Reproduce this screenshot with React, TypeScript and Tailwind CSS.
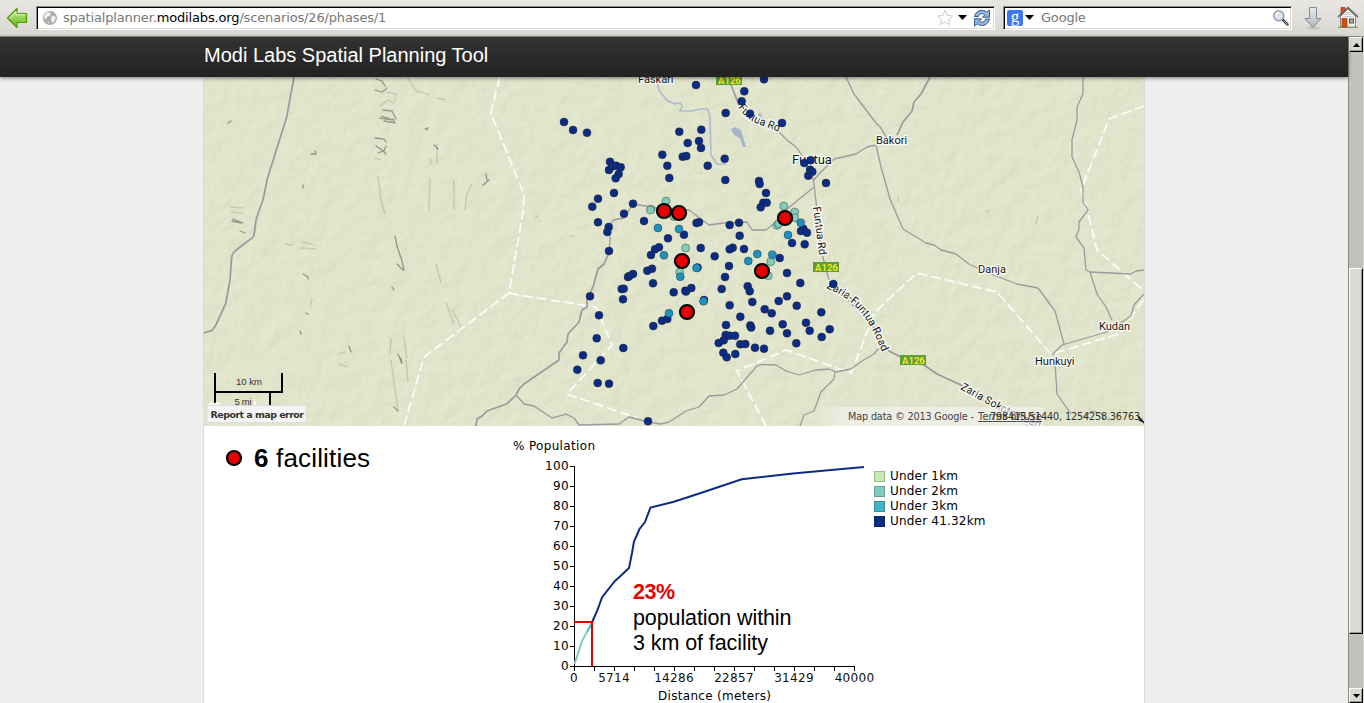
import React from "react";

type Point = [number, number];

const NAVY: Point[] = [
  [696,85],[564,122],[573,130],[587,132.7],[679.3,131.7],[701.3,129.7],[687.7,143],[699,141],[701,148],[662.3,154.7],
  [682.7,156.7],[686.3,156],[667.3,165.7],[707.7,165.7],[669.3,178],[610,161.7],[609,170],[612.3,166.3],[616,165.7],[620.7,167.3],
  [618.7,174],[615.7,178.3],[614,193],[598,198.7],[592.3,206.7],[633,203.7],[624,213.7],[598,222.3],[608.7,227],[607.3,232],
  [609,251],[644,221],[696.5,223],[699,222.3],[684,234.7],[668,238.3],[659,247.2],[655,249.3],[651,255],[700.7,248],
  [764,79.3],[744.3,91.3],[741.7,101.3],[750,113.7],[725.7,113],[782,123],[724.7,158.7],[725.3,180],[804.3,163],[810.7,160.3],
  [810,169.7],[812.3,171.7],[808.3,175.7],[826,183],[759,181],[759.7,184],[766,193],[763.3,202.7],[766.7,202.7],[760.7,207.3],
  [729.7,225],[739,222.7],[739.7,235.7],[803.3,228.7],[801,231],[807,232.7],[792,243],[804.7,244.3],[732.7,247.7],[729.7,249.3],
  [744,249],[590,296.3],[599,315.3],[596.7,338.3],[583,355.3],[600.7,360.3],[577.3,369.7],[597.7,383],[609,383.7],[623.3,348],
  [648,421.3],[628,277],[633,274],[629.3,276],[621.7,289],[623.7,288.7],[623,299.3],[647.3,270.7],[652,268.7],[653,283.3],
  [714.7,256.3],[673.7,292.3],[685.3,290.7],[686,291.5],[691.3,288],[653.3,326],[662,320.7],[667.3,319],[704,300],[729,266],
  [725,277],[721.7,289],[747.7,286.3],[749.7,291.3],[752.3,302],[729.7,305.3],[740.3,316.7],[726,325],[750.3,325.5],[751.2,327.5],
  [770,330.7],[779.7,258],[787,273],[800.3,283],[787,296.3],[778.7,301],[796.7,305.7],[764.7,309.3],[771.7,313.3],[821.3,312.3],
  [806,322.7],[809.7,330.7],[829.7,329.3],[821.7,337],[782.7,324.3],[787,333.3],[796.3,343.3],[833.3,284],[725.7,335],[729.7,335.7],
  [735,335.7],[718.7,343],[723.7,340.3],[740.3,344.3],[745.3,344],[755,347.7],[764,348.7],[723.3,352.7],[726.7,357.3],[735.3,354],
  [697.5,267.5],
];
const TEAL: Point[] = [
  [666,201],[651,209.3],[650.5,210],[674,216.5],[685.7,248],[679.7,272],[783.7,206],[794.7,212],[794.7,217.7],[777,225.3],[778.7,223.7],[770.7,261.7],[768.3,275.7],
];
const BLUE: Point[] = [
  [658,228],[679,229],[664,255.3],[696.5,268],[680.3,276.7],[669,313.3],[703.5,301.3],[800.7,222.7],[788,235],[748.3,261],[757.3,254],[772.3,254.7],
];
const FACILITIES: Point[] = [[664,211],[679,213],[785,218],[682,261],[762,271],[687,312]];

const MAJOR_ROADS = [
  "M294 77L286.7 117L267.3 178.7L263.3 198.7L256.3 218.7L254 235.3Q252 239 248 241L235 251Q232 254 231.7 257L230 280L225.7 303.7L215.7 325.3L212 330.5L204 333",
  "M476 426L477 419L482 416L487 411L507 403.7L516 395L519 389L524 384L559 360V353L567 342L568 334L579 322L582 310L587 307V300L593 287L598 269L604 264L609 253",
  "M729 80L739 105M883 345L889 351L901 357L924 365L937 374L961 385L994 407L1031 427",
  "M897 135L903 122L912 111L914 102L921 94L930 77",
];
const MINOR_ROADS = [
  "M609 253L610 239L609 227L613 220L624 218L633 204L652 207L664 210L689 210L709 225L724 223L747 222L752 230H766L779 220L787 209L814 187",
  "M516 395L524 404L534 406L552 418L566 414L574 418L579 425L619 424L629 417L648 422L661 424L669 422L686 411L699 407L709 396L724 395L737 389L757 366L762 364.5L776 365L786 371L799 375L816 370L829 369L836 372L851 369L862 361L874 354L877 350L883 347",
  "M835 372L834 379L821 392L814 411L804 415L800 426",
  "M776 129L787 140L796 147L803 157M812 172L814 184L817 210L821 250L827 273L830 283L871 323L883 345",
  "M814 180L819 174L834 159L856 154L867 147L876 145L881 167L890 199L903 229L926 243L934 245L941 250L956 254L969 264L991 274L1017 284L1038 288L1055 311L1064 344",
  "M846 77L854 94L876 123L881 128L886 137",
  "M1083 77V94L1077 107V120L1072 140V157L1079 172L1083 187V202L1088 210L1079 222V229L1076 237L1084 248L1086 270L1090 272L1131 274L1136 271L1144 270M1090 272L1097 294L1106 307L1112 320",
  "M1052 355L1062 345L1107 332L1131 316L1134 305L1144 294M1055 362L1057 394L1071 414M1084 417L1092 411L1102 414L1104 420",
];
const BORDERS = [
  "M499.7 77L490.7 113L524 194L523 212L509 293L424 357L404 426",
  "M509 293L524 296L596 307L612 345L567 394L637 418",
  "M766 426L737 371L786 350L851 373L871 323L874 313L917 273L997 292L1051 354L1119 334L1144 299",
  "M1144 106L1109 119L1081 190L1087 210L1097 250L1144 291",
];
const DARK_RELIEF = [
  "M376 79l6 2l3 5M375 90l7 2l5-4M383 110l9 1l4 8M380 118l13 2l-11-4M384 121l11 2l-2-4M375 138l9 1l2 3M376 146l8 5l2-5M378 153l5-2l3 3",
  "M233 219l10 4M232 221l9 2M240 231l5 2M231 121l-3 2M311 154l5 0l-1-3M303 185v3M303 274l5 3v2M306 313l2 1M300 331l1 3M349 346l2 6M425 129l3-1l-1 2",
  "M395 236l2 10l5 15l2 9M397 264l6 6M392 287l2 3M398 354l4 10l-1-6M394 407l4 4M434 145l4 4M486 174l1 6M489 180l-6 5",
];
const SOFT_RELIEF = [
  "M230 207l14 1M231 212l12 1M386 92l10 2l-1 8M380 106l8-6l6 3M375 158l6 2M378 176l3 24l4 14M404 337l3 22M391 338l-1 16M391 360l4 30l3 20M406 360l2 22",
  "M430 158l1 7M430 178l-1 32M472 184l-5 9l-2 17M436 264l5 19M446 302l8 23M452 309l9 18M437 98l9 2M415 90l14 5M437 143v20M454 180v30M406 75l10 16",
  "M285 244l8 1M301 242l14 3M300 248l16 1M312 298l-2 10M338 354l7-2M338 364l10 3M538 216l-3 1M573 235l-3 2M702 172l-2 2M986 212l3-1M1038 216l-2 8M898 197v5",
];

const SANS = '"Liberation Sans", Arial, sans-serif';
const DEJAVU = '"DejaVu Sans", Verdana, sans-serif';
const ROBOTO = "Roboto, sans-serif";

function MapLabel({ x, y, size = 11, children }: { x: number; y: number; size?: number; children: string }) {
  return (
    <text x={x} y={y} fontSize={size} fontFamily={ROBOTO} fill="#141414" stroke="#fff" strokeWidth={2.5} strokeOpacity={0.85} paintOrder="stroke">
      {children}
    </text>
  );
}

function CurvedLabel({ id, d, children }: { id: string; d: string; children: string }) {
  return (
    <>
      <path id={id} d={d} fill="none" />
      <text fontSize={10.8} fontFamily={ROBOTO} fill="#141414" stroke="#f6f6ee" strokeWidth={3} paintOrder="stroke">
        <textPath href={"#" + id}>{children}</textPath>
      </text>
    </>
  );
}

function Shield({ x, y }: { x: number; y: number }) {
  return (
    <g>
      <rect x={x} y={y} width={26} height={10} fill="#5f9c3b" />
      <text x={x + 2} y={y + 8.5} fontSize={9.6} fontWeight={600} fontFamily={ROBOTO} fill="#f3ee1c">A126</text>
    </g>
  );
}

function Dots({ points, color }: { points: Point[]; color: string }) {
  return (
    <g fill={color} stroke="#222" strokeOpacity={0.4} strokeWidth={1}>
      {points.map(([x, y], i) => <circle key={i} cx={x} cy={y} r={4} />)}
    </g>
  );
}

function PlannerMap() {
  return (
    <svg className="block h-[349px] w-[940px]" viewBox="204 77 940 349">
      <defs>
        <filter id="relief" x="0" y="0" width="100%" height="100%" colorInterpolationFilters="sRGB">
          <feTurbulence type="fractalNoise" baseFrequency="0.06" numOctaves={3} seed={8} result="n" />
          <feDiffuseLighting in="n" surfaceScale={0.6} diffuseConstant={1.155} lightingColor="#e0e5cb">
            <feDistantLight azimuth={225} elevation={60} />
          </feDiffuseLighting>
        </filter>
        <filter id="soften" x="-5%" y="-5%" width="110%" height="110%"><feGaussianBlur stdDeviation="0.7" /></filter>
        <linearGradient id="fade" x1="0" x2="1"><stop offset="0" stopColor="#fff" stopOpacity="0" /><stop offset="0.15" stopColor="#f5f5f5" stopOpacity="0.6" /></linearGradient>
      </defs>
      <rect x="204" y="77" width="940" height="349" fill="#e0e5cb" />
      <rect x="204" y="77" width="940" height="349" filter="url(#relief)" opacity="0.4" />
      <g fill="none" stroke="#6c7460" strokeOpacity={0.22} strokeWidth={1.6} filter="url(#soften)">
        {SOFT_RELIEF.map((d) => <path key={d} d={d} />)}
      </g>
      <g fill="none" stroke="#464c3e" strokeOpacity={0.5} strokeWidth={1.3} strokeLinecap="round" filter="url(#soften)">
        {DARK_RELIEF.map((d) => <path key={d} d={d} />)}
      </g>
      <g fill="none" stroke="#aebbcf" strokeWidth={1.6}>
        <path d="M657 83L660 92L668 101L675 104Q681 101 682 106L680 111H692L701 109L707 109Q710 112 710 120L711 155L717 164H726" />
      </g>
      <path d="M731 129l4-2l6 3l2 7l3 10l-3 0l-3-9l-6-3zM756 119l4-7l2 5l5 4l-3 3z" fill="#a5b6cb" />
      <g fill="none" stroke="#fff" strokeOpacity={0.9} strokeWidth={1.8} strokeDasharray="10 4">
        {BORDERS.map((d) => <path key={d} d={d} />)}
      </g>
      <g fill="none" stroke="#9b9b9d" strokeWidth={1.3} strokeLinejoin="round">
        {MINOR_ROADS.map((d) => <path key={d} d={d} />)}
      </g>
      <g fill="none" stroke="#999a9b" strokeWidth={1.7} strokeLinejoin="round">
        {MAJOR_ROADS.map((d) => <path key={d} d={d} />)}
      </g>
      <MapLabel x={638} y={83}>Faskari</MapLabel>
      <MapLabel x={876} y={144}>Bakori</MapLabel>
      <MapLabel x={792} y={164} size={13}>Funtua</MapLabel>
      <MapLabel x={978} y={273}>Danja</MapLabel>
      <MapLabel x={1099} y={330}>Kudan</MapLabel>
      <MapLabel x={1035} y={365}>Hunkuyi</MapLabel>
      <Shield x={716} y={75} />
      <Shield x={813} y={262} />
      <Shield x={900} y={355} />
      <CurvedLabel id="fr1" d="M738 107Q746 119 757 123.500L790 136">Funtua Rd</CurvedLabel>
      <CurvedLabel id="fr2" d="M813 207L820 262">Funtua Rd</CurvedLabel>
      <CurvedLabel id="zf" d="M826 288C848 297 864 309 878 342L884 356">Zaria-Funtua Road</CurvedLabel>
      <CurvedLabel id="zs" d="M960 389L1000 411L1060 438">Zaria Sokoto Road</CurvedLabel>
      <Dots points={NAVY} color="#0c2c84" />
      <Dots points={TEAL} color="#7fcdbb" />
      <Dots points={BLUE} color="#1d91c0" />
      <g fill="#e60000" stroke="#000" strokeWidth={2.2}>
        {FACILITIES.map(([x, y]) => <circle key={x} cx={x} cy={y} r={7} />)}
      </g>
      <path d="M215 373V405M214 392H283M282 373V392M270 392V405" fill="none" stroke="#000" strokeWidth={2} />
      <text x={236} y={385} fontSize={9.5} fontFamily={SANS} fill="#333" textLength={26}>10 km</text>
      <text x={234.500} y={405} fontSize={9.5} fontFamily={SANS} fill="#333" textLength={17}>5 mi</text>
      <path d="M209 405q4-4 6 0q3-4 5 0M255 405v-4" stroke="#fff" strokeWidth={2} fill="none" />
      <rect x="207" y="405.5" width="99" height="17" fill="#f5f5f5" stroke="#dcdce4" />
      <text x={210.500} y={418} fontSize={9.5} fontWeight="bold" fontFamily={DEJAVU} fill="#333" textLength={93.500}>Report a map error</text>
      <rect x="812" y="407" width="231" height="19" fill="url(#fade)" />
      <text x={848} y={420} fontSize={9.7} fontFamily={DEJAVU} fill="#444" textLength={126}>Map data © 2013 Google -</text>
      <text x={978} y={420} fontSize={9.7} fontFamily={DEJAVU} fill="#444" textLength={64} textDecoration="underline">Terms of Use</text>
      <text x={990} y={420} fontSize={9.7} fontFamily={DEJAVU} fill="#333" textLength={153}>798415.51440, 1254258.36763,</text>
      <path d="M1138 416L1144 423M1139 420l5 2" stroke="#222" strokeWidth={1.6} />
    </svg>
  );
}

const X_LABELS: [number, string][] = [[574, "0"], [614, "5714"], [674, "14286"], [734, "22857"], [794, "31429"], [854.5, "40000"]];

function PopulationChart() {
  return (
    <svg className="block h-[277px] w-[374px] shrink-0" viewBox="500 426 374 277" fontFamily={DEJAVU} fontSize={12}>
      <text x={513} y={450} textLength={82}>% Population</text>
      <g stroke="#000" strokeWidth={1} shapeRendering="crispEdges">
        <path d="M574.5 466V671M570 666.5H855" fill="none" />
        {Array.from({ length: 10 }, (_, i) => <path key={i} d={`M570 ${466.5 + i * 20}h5`} />)}
        {Array.from({ length: 14 }, (_, i) => <path key={i} d={`M${594.5 + i * 20} 666v5`} />)}
      </g>
      {Array.from({ length: 11 }, (_, i) => <text key={i} x={569} y={670 - i * 20} textAnchor="end" letterSpacing={0.4}>{String(i * 10)}</text>)}
      {X_LABELS.map(([x, label]) => <text key={label} x={x} y={682} textAnchor="middle" letterSpacing={0.3} fill="#111">{label}</text>)}
      <text x={658} y={700} textLength={113}>Distance (meters)</text>
      <g fill="none" strokeWidth={2}>
        <path d="M574.5 664L582.5 640L587 632" stroke="#7fcdbb" />
        <path d="M587 632L592 623" stroke="#41b6c4" />
        <path d="M592 622.5L597.5 610L602 597.5L614.5 581.5L620 576.5L629 568L632 553L634 541.5L639.5 529L645 522L650.5 507.5L673 502L700 493.3L741.7 479.3L793 473.5L864 467" stroke="#0c2c84" />
        <path d="M574 622H592V666" stroke="#e60000" />
      </g>
      <g fontFamily={SANS} fontSize={21.5}>
        <text x={633} y={599} fontWeight="bold" fill="#e60000" textLength={42}>23%</text>
        <text x={633} y={625} textLength={158.5}>population within</text>
        <text x={633} y={650} textLength={135}>3 km of facility</text>
      </g>
    </svg>
  );
}

const LEGEND = [
  { label: "Under 1km", color: "bg-[#c7e9b4]" },
  { label: "Under 2km", color: "bg-[#7fcdbb]" },
  { label: "Under 3km", color: "bg-[#41b6c4]" },
  { label: "Under 41.32km", color: "bg-[#0c2c84]" },
];

function BrowserBar() {
  return (
    <div className="flex h-[37px] items-start border-b border-[#8f8b84] bg-gradient-to-b from-[#e8e7e4] to-[#d9d7d2] pt-[6px] font-['DejaVu_Sans',sans-serif] text-[13px] text-[#777]">
      <svg className="ml-[6px] mt-px h-[22px] w-[22px] shrink-0" viewBox="0 0 22 22">
        <defs><linearGradient id="green" x2="0" y2="1"><stop stopColor="#c9f195" /><stop offset="1" stopColor="#5db512" /></linearGradient></defs>
        <path d="M1.500 11L11 1.500V6.500H20.500V15.500H11V20.500Z" fill="url(#green)" stroke="#4a9a0b" strokeWidth="1.2" strokeLinejoin="round" />
        <path d="M3.500 11L10 4.500V7.700H19.300" fill="none" stroke="#e1f9c4" />
      </svg>
      <div className="ml-[8px] flex h-[24px] w-[959px] shrink-0 items-center border border-t-[#8f8b84] border-r-white border-b-white border-l-[#8f8b84] bg-white pr-[2px] pl-[5px] shadow-[inset_1px_1px_0_#000,inset_-1px_-1px_0_#dddbd7]">
        <svg className="h-4 w-4 shrink-0" viewBox="0 0 16 16">
          <circle cx="8" cy="8" r="7" fill="#a9a9a9" />
          <path d="M3 4l3-2l3 1l-1 3l-3 1l-1 3l-2-3zM9 7l3-2l2 3l-2 4l-2 1l-1-3zM5 11l2 1v2z" fill="#eee" />
        </svg>
        <span className="mb-px ml-[5px] tracking-[-0.15px] whitespace-pre">spatialplanner.<span className="text-black">modilabs.org</span>/scenarios/26/phases/1</span>
        <svg className="ml-auto h-[18px] w-[56px] shrink-0" viewBox="936 9 56 18">
          <path d="M945 10.500l2.200 4.900l5.300.6l-4 3.500l1.200 5.200l-4.700-2.700l-4.700 2.700l1.200-5.200l-4-3.500l5.300-.6z" fill="#fff" stroke="#ccc" />
          <path d="M958 15h9l-4.500 5z" fill="#000" />
          <g fill="#8fb4df" stroke="#244f87" strokeWidth=".9" strokeLinejoin="round">
            <path d="M974.500 16.500C975.500 10.500 983 8.500 986.500 12.200L989.500 10V17.200H982.500L984.700 15C982 12.500 979 13.500 978.500 16.500Z" />
            <path d="M989.500 19C988.500 25 981 27.500 977.500 23.800L974.500 26V18.800H981.500L979.300 21C982 23.500 985 22 985.500 19Z" />
          </g>
        </svg>
      </div>
      <div className="ml-[8px] flex h-[24px] w-[289px] shrink-0 items-center border border-t-[#8f8b84] border-r-white border-b-white border-l-[#8f8b84] bg-white pl-[3px] shadow-[inset_1px_1px_0_#000,inset_-1px_-1px_0_#dddbd7]">
        <span className="flex h-4 w-4 shrink-0 items-center justify-center rounded-[2px] bg-[#3f78f5] pb-[4px] font-['Liberation_Serif',serif] text-[17px] leading-none text-white">g</span>
        <svg className="ml-[2px] h-[6px] w-[9px]" viewBox="0 0 9 6"><path d="M0 0h9L4.5 5z" /></svg>
        <span className="mb-px ml-[7px] tracking-[-0.2px]">Google</span>
        <svg className="mr-[1px] ml-auto h-[18px] w-[18px]" viewBox="0 0 18 18">
          <path d="M11 11L15.500 15.500" stroke="#444" strokeWidth="2.5" strokeLinecap="round" />
          <path d="M12 12L15.500 15.500" stroke="#aaa" strokeWidth="1" />
          <circle cx="6.800" cy="6.800" r="5" fill="#d6e6f7" stroke="#999" strokeWidth="1.4" />
          <path d="M4 6.500a3 3 0 0 1 3-3" fill="none" stroke="#fff" strokeWidth="1.5" />
        </svg>
      </div>
      <svg className="ml-[11px] h-[24px] w-[20px] shrink-0" viewBox="0 0 20 24">
        <defs><linearGradient id="silver" x2="0" y2="1"><stop stopColor="#e9edef" /><stop offset="1" stopColor="#adb7bc" /></linearGradient></defs>
        <ellipse cx="10" cy="22" rx="7" ry="1.5" fill="#aaa" opacity=".5" />
        <path d="M6.500 1.500H13.500V12.500H18L10 21.500L2 12.500H6.500Z" fill="url(#silver)" stroke="#858a8c" strokeLinejoin="round" />
      </svg>
      <svg className="ml-[14px] h-[22px] w-[22px] shrink-0" viewBox="0 0 22 22">
        <path d="M1 21.500h20" stroke="#85a83d" strokeWidth="1.5" />
        <path d="M4 1.500h4v8H4z" fill="#d75020" stroke="#9c2d0c" strokeWidth=".7" />
        <path d="M3.500 10.500L11 3l7.500 7.500V21h-15z" fill="#f4f4ef" stroke="#888" />
        <path d="M1 11L11 1.500L21 11" fill="none" stroke="#666" strokeWidth="1.6" />
        <path d="M7 8.500h8M6 10.500h10M9 6.500h4" stroke="#ccc" />
        <path d="M5 12.500h5V21H5z" fill="#d54d12" stroke="#98300b" strokeWidth=".7" />
        <rect x="12.5" y="13" width="4" height="4" fill="#aaa" stroke="#555" />
      </svg>
    </div>
  );
}

function ScrollButton({ up }: { up?: boolean }) {
  return (
    <div className="flex h-[15px] w-full items-center justify-center border border-t-white border-r-black border-b-black border-l-white bg-[#dad9d4] shadow-[inset_-1px_-1px_0_#999792]">
      <svg className="h-[4px] w-[7px]" viewBox="0 0 7 4"><path d={up ? "M0 4h7L3.5 0z" : "M0 0h7L3.5 4z"} /></svg>
    </div>
  );
}

export default function App() {
  return (
    <div className="flex h-[703px] w-[1364px] flex-col overflow-hidden bg-[#eee]">
      <BrowserBar />
      <div className="flex min-h-0 flex-1">
        <div className="flex min-w-0 flex-1 flex-col">
          <header className="relative z-10 flex h-[40px] shrink-0 items-center bg-gradient-to-b from-[#333] to-[#222] pb-[5px] pl-[204px] font-['Liberation_Sans',sans-serif] text-[20px] text-white shadow-[0_1px_4px_rgba(0,0,0,0.5)]">
            Modi Labs Spatial Planning Tool
          </header>
          <main className="ml-[203px] w-[942px] flex-1 border-x border-[#ddd] bg-white">
            <PlannerMap />
            <div className="flex h-[277px]">
              <div className="flex h-[64px] w-[296px] shrink-0 items-center pl-[21px] font-['Liberation_Sans',sans-serif] text-[26px] text-black">
                <svg className="mr-[11px] h-[18px] w-[18px]" viewBox="0 0 18 18"><circle cx="9" cy="9" r="7" fill="#e60000" stroke="#000" strokeWidth="2.2" /></svg>
                <span className="tracking-[0.17px]"><b>6</b> facilities</span>
              </div>
              <PopulationChart />
              <ul className="mt-[43px] font-['DejaVu_Sans',sans-serif] text-[12px] leading-[15px] tracking-[0.2px] text-black">
                {LEGEND.map(({ label, color }) => (
                  <li key={label} className="flex h-[15px] items-start">
                    <span className={`mt-[2px] h-[11px] w-[11px] border border-black/20 ${color}`} />
                    <span className="ml-[5px] whitespace-nowrap">{label}</span>
                  </li>
                ))}
              </ul>
            </div>
          </main>
        </div>
        <div className="flex w-4 shrink-0 flex-col border-r border-l border-r-[#dad9d4] border-l-[#888780] bg-[#c3c1bc]">
          <ScrollButton up />
          <div className="mt-[216px] h-[366px] w-full border border-t-white border-r-black border-b-black border-l-white bg-[#dad9d4] shadow-[inset_-1px_-1px_0_#999792]" />
          <div className="flex-1" />
          <ScrollButton />
        </div>
      </div>
    </div>
  );
}
